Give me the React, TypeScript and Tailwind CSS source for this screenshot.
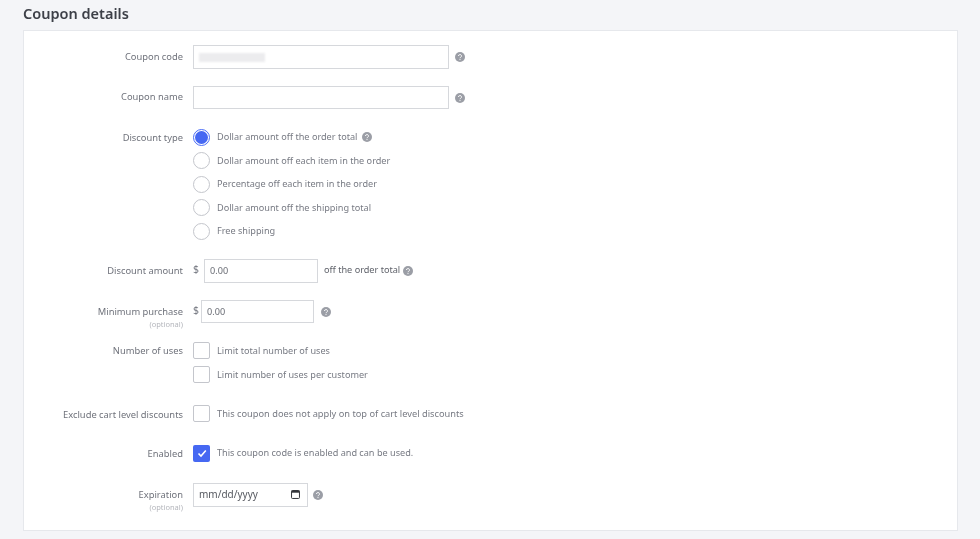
const Help = ({ className = "" }: { className?: string }) => (
  <svg viewBox="0 0 10 10" className={`w-[10px] h-[10px] shrink-0 ${className}`}>
    <circle cx="5" cy="5" r="5" fill="#9b9ea6" />
    <path d="M3.5 4a1.5 1.4 0 1 1 2.2 1.2c-.5.3-.7.5-.7 1" fill="none" stroke="#fff" strokeWidth="1" />
    <circle cx="5" cy="7.6" r=".6" fill="#fff" />
  </svg>
);

const Label = ({ children, optional }: { children: string; optional?: boolean }) => (
  <div className="w-[159px] shrink-0 text-right text-[9.35px] text-[#6f727b] leading-[14px]">
    <div>{children}</div>
    {optional && <div className="text-[7.5px] leading-[10px] text-[#b4b6bc]">(optional)</div>}
  </div>
);

const Radio = ({ checked }: { checked?: boolean }) =>
  checked ? (
    <span className="w-[17px] h-[17px] rounded-full border border-[#4a6cf7] flex items-center justify-center shrink-0">
      <span className="w-[13px] h-[13px] rounded-full bg-[#4668f2]" />
    </span>
  ) : (
    <span className="w-[17px] h-[17px] rounded-full border border-[#c4c6cc] bg-white shrink-0" />
  );

const Box = () => <span className="w-[17px] h-[17px] rounded-[2px] border border-[#c4c6cc] bg-white shrink-0" />;

const options = [
  "Dollar amount off each item in the order",
  "Percentage off each item in the order",
  "Dollar amount off the shipping total",
  "Free shipping",
];

const inputClass = "border border-[#d6d8dc] bg-white flex items-center text-[#6a6d75]";

export default function App() {
  return (
    <div
      className="w-[980px] h-[539px] overflow-hidden bg-[#f4f5f8] pl-[23px] pr-[22px] text-[9.15px] text-[#777a83] blur-[0.3px]"
      style={{ fontFamily: '"Noto Sans", sans-serif' }}
    >
      <h1 className="text-[14.5px] leading-[27px] font-semibold text-[#3d4048]">Coupon details</h1>
      <div className="mt-[3px] h-[501px] bg-white border border-[#e6e8ec] pt-[14px]">
        <div className="flex items-center gap-[10px]">
          <Label>Coupon code</Label>
          <div className={`${inputClass} h-[24px] w-[256px] px-[5px]`}>
            <div className="w-[66px] h-[9px] bg-[#ececee] blur-[1px]" />
          </div>
          <Help className="-ml-[4px]" />
        </div>

        <div className="flex items-center gap-[10px] mt-[17px]">
          <div className="pb-[2px]">
            <Label>Coupon name</Label>
          </div>
          <div className={`${inputClass} h-[23px] w-[256px]`} />
          <Help className="-ml-[4px]" />
        </div>

        <div className="flex gap-[10px] mt-[19.5px]">
          <div className="pt-[2px]">
            <Label>Discount type</Label>
          </div>
          <div className="flex flex-col gap-[6.5px]">
            <div className="flex items-center gap-[7px]">
              <Radio checked />
              <span>Dollar amount off the order total</span>
              <Help className="-ml-[2px]" />
            </div>
            {options.map((o) => (
              <div key={o} className="flex items-center gap-[7px]">
                <Radio />
                <span>{o}</span>
              </div>
            ))}
          </div>
        </div>

        <div className="flex items-center gap-[10px] mt-[19.5px]">
          <Label>Discount amount</Label>
          <div className="flex items-center">
            <span className="-mt-[2px] mr-[5px] text-[10.5px]">$</span>
            <div className={`${inputClass} h-[24px] w-[114px] px-[5px]`}>0.00</div>
            <span className="-mt-[2px] ml-[6px] text-[#5f626a]">off the order total</span>
            <Help className="ml-[3px]" />
          </div>
        </div>

        <div className="flex gap-[10px] mt-[17px]">
          <div className="pt-[5px]">
            <Label optional>Minimum purchase</Label>
          </div>
          <div className="flex items-center h-[23px]">
            <span className="-mt-[2px] mr-[2px] text-[10.5px]">$</span>
            <div className={`${inputClass} h-[23px] w-[113px] px-[5px]`}>0.00</div>
            <Help className="ml-[7px]" />
          </div>
        </div>

        <div className="flex gap-[10px] mt-[13px]">
          <div className="pt-[2px]">
            <Label>Number of uses</Label>
          </div>
          <div className="flex flex-col gap-[7px]">
            <div className="flex items-center gap-[7px]">
              <Box />
              <span>Limit total number of uses</span>
            </div>
            <div className="flex items-center gap-[7px]">
              <Box />
              <span>Limit number of uses per customer</span>
            </div>
          </div>
        </div>

        <div className="flex items-center gap-[10px] mt-[22px]">
          <div className="pt-[2px]">
            <Label>Exclude cart level discounts</Label>
          </div>
          <div className="flex items-center gap-[7px]">
            <Box />
            <span className="text-[9.25px]">This coupon does not apply on top of cart level discounts</span>
          </div>
        </div>

        <div className="flex items-center gap-[10px] mt-[22.5px]">
          <div className="pt-[2px]">
            <Label>Enabled</Label>
          </div>
          <div className="flex items-center gap-[7px]">
            <span className="w-[17px] h-[17px] rounded-[2px] bg-[#4668f2] flex items-center justify-center shrink-0">
              <svg viewBox="0 0 10 10" className="w-[10px] h-[10px]">
                <path d="M1.5 5.5 4 8l4.8-5.5" fill="none" stroke="#fff" strokeWidth="1.6" />
              </svg>
            </span>
            <span>This coupon code is enabled and can be used.</span>
          </div>
        </div>

        <div className="flex gap-[10px] mt-[21px]">
          <div className="pt-[5px]">
            <Label optional>Expiration</Label>
          </div>
          <div className="flex items-center h-[24px]">
            <div className={`${inputClass} h-[24px] w-[115px] pl-[5px] pr-[7px] justify-between text-[#55585f] text-[10px]`}>
              <span>mm/dd/yyyy</span>
              <svg viewBox="0 0 10 10" className="w-[9px] h-[9px]">
                <rect x=".6" y=".6" width="8.8" height="8.8" rx="1" fill="none" stroke="#33353a" strokeWidth="1.1" />
                <rect x=".6" y=".6" width="8.8" height="2.4" fill="#33353a" />
              </svg>
            </div>
            <Help className="ml-[5px]" />
          </div>
        </div>
      </div>
    </div>
  );
}
